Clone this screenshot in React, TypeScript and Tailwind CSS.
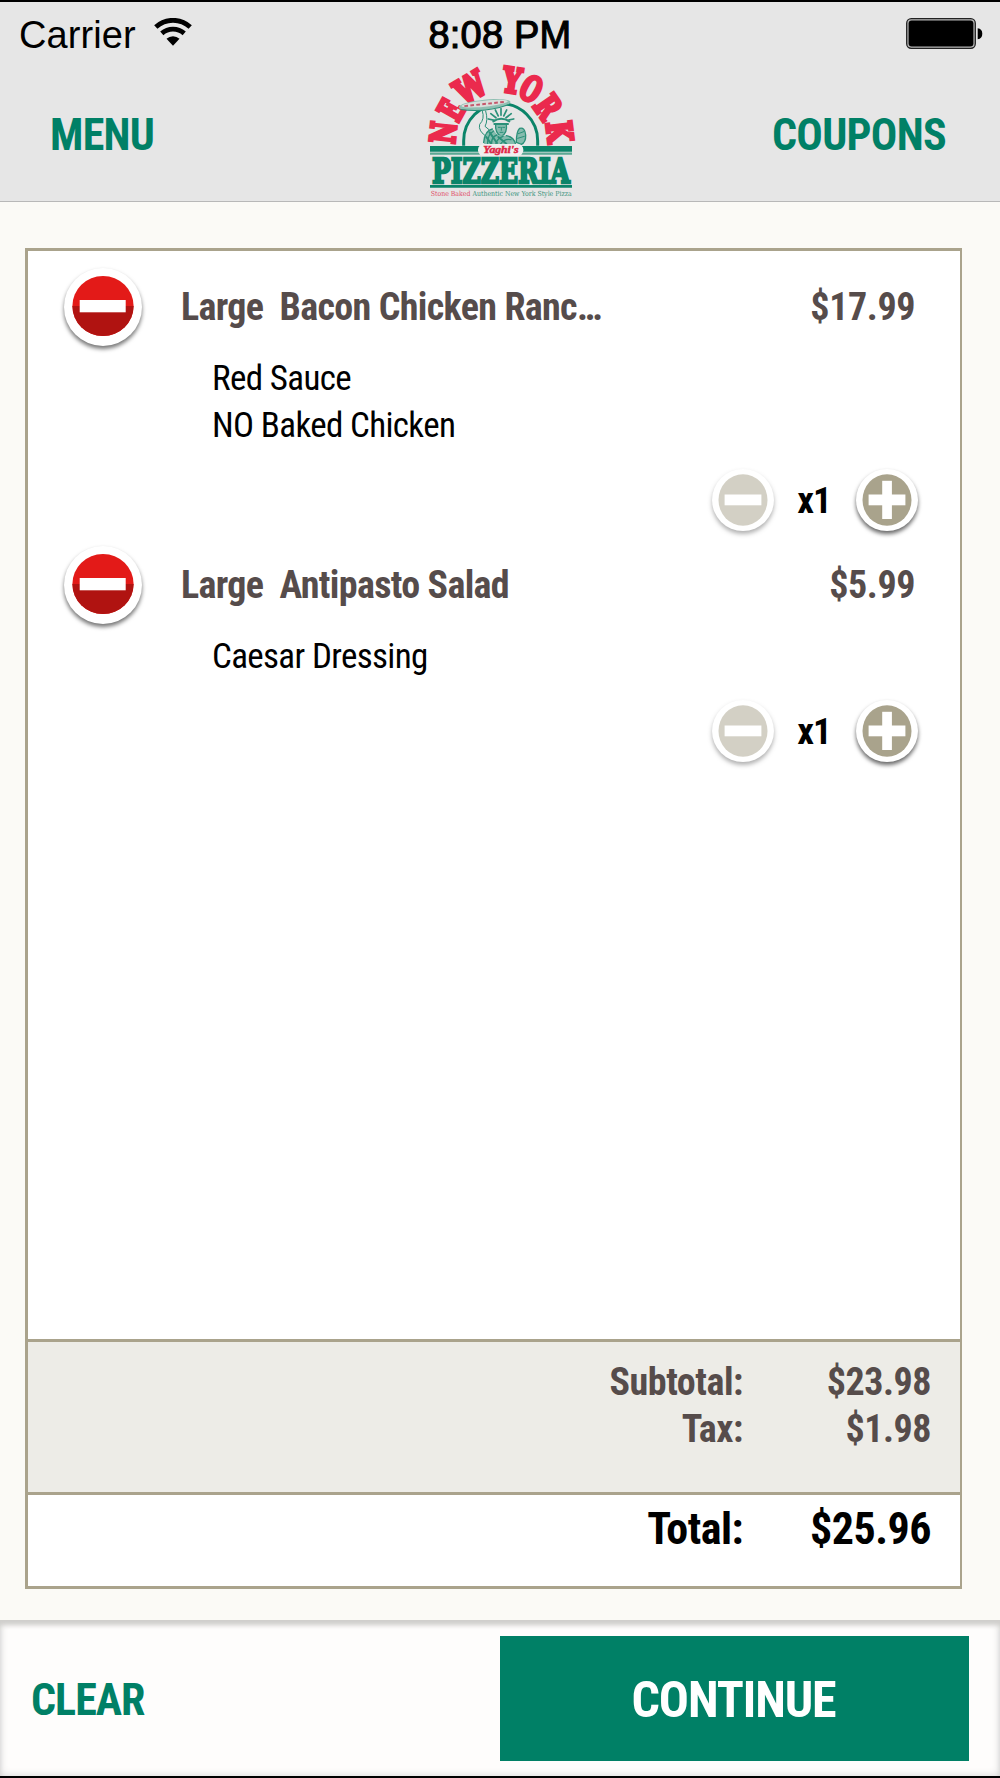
type Item = {
  name: string;
  price: string;
  options: string[];
  quantity: number;
};

const items: Item[] = [
  {
    name: 'Large  Bacon Chicken Ranc…',
    price: '$17.99',
    options: ['Red Sauce', 'NO Baked Chicken'],
    quantity: 1,
  },
  {
    name: 'Large  Antipasto Salad',
    price: '$5.99',
    options: ['Caesar Dressing'],
    quantity: 1,
  },
];

// NEW YORK, one letter at a time round the arch
const archLetters = [
  { char: 'N', x: 98, y: 232, angle: -84, width: 68 },
  { char: 'E', x: 122, y: 165, angle: -61, width: 64 },
  { char: 'W', x: 180, y: 98, angle: -31, width: 80 },
  { char: 'Y', x: 305, y: 76, angle: 9, width: 76 },
  { char: 'O', x: 363, y: 101, angle: 29, width: 66 },
  { char: 'R', x: 413, y: 155, angle: 55, width: 70 },
  { char: 'K', x: 448, y: 230, angle: 83, width: 70 },
];

const crownRays = [-78, -52, -26, 0, 26, 52, 78];

function Logo() {
  return (
    <svg viewBox="50 33 450 405" className="ml-[2px] h-[135px] w-[150px] shrink-0 overflow-visible">
      <path d="M160 272 V257 A111 111 0 0 1 382 257 V272" fill="none" stroke="#0a8469" strokeWidth="9" />

      {/* Statue */}
      <g fill="none" stroke="#2b9079" strokeWidth="4" strokeLinecap="round">
        {crownRays.map((angle) => (
          <path key={angle} d="M272 181 V161" strokeWidth="5" transform={`rotate(${angle} 272 200)`} />
        ))}
        <path d="M249 199 Q272 184 297 199 M252 207 H293" strokeWidth="6" />
        <path d="M216 168 Q224 192 208 208 Q202 228 230 246 M226 168 Q234 196 224 214 L236 224" strokeWidth="3" />
        <path d="M256 208 Q253 234 273 244 Q292 234 288 208 Z" fill="#85bcae" />
        <path d="M264 217 h6 M277 217 h6 M269 232 h9 M273 217 v9" strokeWidth="3" />
        <path d="M220 264 Q224 226 246 222 L262 240 L300 244 Q314 252 316 268 H222 Z" fill="#85bcae" stroke="none" />
        <path d="M220 262 Q224 226 246 222 M232 268 Q230 240 250 228 M244 268 Q242 246 260 240 M256 268 Q260 250 278 244 M288 242 Q310 246 316 268 M270 268 Q282 250 302 254" />
        <path d="M238 232 L260 264 M228 246 L242 266 M264 246 L288 266" strokeWidth="6" />
        <path d="M328 220 Q344 216 346 240 Q347 262 333 268 L318 262 Q318 230 328 220 Z" fill="#85bcae" />
        <path d="M324 236 L340 230 M322 250 L342 244" strokeWidth="3" />
      </g>

      <g fontFamily="'DejaVu Serif', serif" fontWeight="700" fontSize="102" fill="#eb2a4d" textAnchor="middle">
        {archLetters.map(({ char, x, y, angle, width }) => (
          <g key={char} transform={`translate(${x} ${y}) rotate(${angle}) scale(${width / 100} 1)`}>
            <text y="37" stroke="#eb2a4d" strokeWidth="11">
              {char}
            </text>
          </g>
        ))}
      </g>

      {/* Pizza on the raised hand */}
      <g transform="rotate(-6 223 149)">
        <ellipse cx="223" cy="149" rx="78" ry="15" fill="#8fbfb2" />
        <ellipse cx="223" cy="146" rx="70" ry="9" fill="#d9dedb" />
        <path d="M162 147 H286" stroke="#c5566a" strokeWidth="6" strokeDasharray="11 7" />
        <path d="M150 156 Q223 174 296 156" fill="none" stroke="#2b9079" strokeWidth="3" />
      </g>

      <path d="M59 273 H485 V290 H59 Z" fill="#0a8469" />
      <path d="M59 296 H485" stroke="#5aa793" strokeWidth="7" />
      <rect x="203" y="267" width="136" height="36" rx="17" fill="#efefef" />
      <text
        x="272"
        y="294"
        textAnchor="middle"
        textLength="106"
        lengthAdjust="spacingAndGlyphs"
        fontFamily="'Liberation Serif', serif"
        fontSize="31"
        fontStyle="italic"
        fontWeight="700"
        fill="#e02647"
        stroke="#e02647"
        strokeWidth="1.5"
      >
        Yaghi's
      </text>
      <text
        x="65"
        y="383"
        textLength="414"
        lengthAdjust="spacingAndGlyphs"
        fontFamily="'DejaVu Serif', serif"
        fontSize="100"
        fontWeight="700"
        fill="#0a8469"
        stroke="#0a8469"
        strokeWidth="7"
      >
        PIZZERIA
      </text>
      <path d="M59 394 H485" stroke="#0a8469" strokeWidth="8" />
      <text
        x="61"
        y="422"
        textLength="423"
        lengthAdjust="spacingAndGlyphs"
        fontFamily="'DejaVu Serif', serif"
        fontSize="21"
        fontWeight="400"
        fill="#3a937d"
      >
        <tspan fill="#e04f69">Stone Baked</tspan> Authentic New York Style Pizza
      </text>
    </svg>
  );
}

function WifiIcon() {
  return (
    <svg viewBox="0 0 38 28" className="h-7 w-[38px]">
      <g fill="none" stroke="#000" strokeWidth="4.8">
        <path d="M1.8 9 A25.4 25.4 0 0 1 36.2 9" />
        <path d="M7.8 15.4 A16.8 16.8 0 0 1 30.2 15.4" />
      </g>
      <path d="M12.5 20.8 A9.6 9.6 0 0 1 25.5 20.8 L19 27.7 Z" />
    </svg>
  );
}

function BatteryIcon() {
  return (
    <svg viewBox="0 0 77 31" className="h-[31px] w-[77px]">
      <rect x="0.7" y="0.7" width="68.6" height="29.6" rx="4.5" fill="#b5b5b5" stroke="#222" strokeWidth="1.3" />
      <rect x="2.6" y="2.6" width="64.8" height="25.8" rx="3" />
      <path d="M71.7 10.3 Q76.3 11 76.3 15.8 Q76.3 20.6 71.7 21.3 Z" />
    </svg>
  );
}

function StatusBar() {
  return (
    <div className="grid h-16 grid-cols-3 items-center font-['Liberation_Sans',sans-serif] text-[38px] leading-none">
      <div className="flex items-center pt-px pl-[19px]">
        <span className="tracking-[0.1px]">Carrier</span>
        <span className="-mt-[5px] ml-[18px]">
          <WifiIcon />
        </span>
      </div>
      <span className="pt-px text-center tracking-[0.2px] [-webkit-text-stroke:1.1px_black]">8:08 PM</span>
      <div className="-mt-px flex justify-end pr-[17px]">
        <BatteryIcon />
      </div>
    </div>
  );
}

function RemoveButton() {
  return (
    <button aria-label="Remove" className="flex size-[78px] shrink-0 items-center justify-center rounded-full bg-white shadow-[0_3px_4px_rgba(0,0,0,0.55)]">
      <svg viewBox="0 0 62 60" className="-mt-px h-[60px] w-[62px]">
        <ellipse cx="31" cy="30" rx="30.6" ry="30" fill="#e31a18" />
        <path d="M0.4 30 A30.6 30 0 0 0 61.6 30 Z" fill="#b01311" />
        <rect x="7.7" y="24" width="46" height="12.3" fill="#fff" />
      </svg>
    </button>
  );
}

function QuantityButton({ kind, disabled }: { kind: 'minus' | 'plus'; disabled?: boolean }) {
  return (
    <button
      aria-label={kind}
      className={`flex size-[62px] items-center justify-center rounded-full bg-white shadow-[0_3px_4px_rgba(0,0,0,0.6)] ${
        disabled ? 'opacity-50' : ''
      }`}
    >
      <svg viewBox="0 0 50 52" className="h-[52px] w-[50px]">
        <ellipse cx="25" cy="26" rx="24.5" ry="25.8" fill="#a9a38c" />
        <rect x="6.6" y="20.5" width="36.8" height="10.8" fill="#fff" />
        {kind === 'plus' && <rect x="20.2" y="6.8" width="9.7" height="38.2" fill="#fff" />}
      </svg>
    </button>
  );
}

function CartItem({ item }: { item: Item }) {
  return (
    <li>
      <div className="flex h-[104px] items-center pt-[7px] pr-[45px] pl-[36px] text-[38px] font-bold text-[#564c4b]">
        <RemoveButton />
        <span className="ml-[39px] grow pt-[2px] whitespace-pre tracking-[-0.65px]">{item.name}</span>
        <span className="pt-[2px] tracking-[-0.4px]">{item.price}</span>
      </div>
      <ul className="pl-[184px] text-[35px] leading-[47px] tracking-[-0.65px]">
        {item.options.map((option) => (
          <li key={option}>{option}</li>
        ))}
      </ul>
      <div className="flex h-20 items-center justify-end pt-[22px] pr-[42px]">
        <QuantityButton kind="minus" disabled={item.quantity === 1} />
        <span className="w-[82px] pt-[2px] pr-[2px] text-center text-[37px] font-bold tracking-[-1px]">x{item.quantity}</span>
        <QuantityButton kind="plus" />
      </div>
    </li>
  );
}

function SummaryRow({ label, value }: { label: string; value: string }) {
  return (
    <div className="flex justify-end pr-[29px]">
      <span>{label}</span>
      <span className="w-[188px] text-right">{value}</span>
    </div>
  );
}

export default function App() {
  return (
    <div className="flex h-[1778px] w-[1000px] flex-col border-y-2 border-black bg-[#fbfaf6] font-['Roboto_Condensed',Roboto,sans-serif] text-black">
      <header className="h-[200px] border-b border-[#b8b8b8] bg-[#e6e6e6]">
        <StatusBar />
        <nav className="grid h-[135px] grid-cols-[1fr_150px_1fr] items-center text-[44px] font-bold text-[#008066]">
          <a href="#menu" className="pt-[2px] pl-[50px] tracking-[-0.7px]">
            MENU
          </a>
          <Logo />
          <a href="#coupons" className="pt-[2px] pr-[54px] text-right tracking-[-0.7px]">
            COUPONS
          </a>
        </nav>
      </header>

      <main className="grow pt-[46px] pl-[25px]">
        <section className="flex h-[1341px] w-[937px] flex-col border-[3px] border-r-2 border-[#aaa38c] bg-white">
          <ul className="grow">
            {items.map((item) => (
              <CartItem key={item.name} item={item} />
            ))}
          </ul>

          <div className="h-[156px] border-y-[3px] border-[#aaa38c] bg-[#edece7] pt-[17px] text-[38px] leading-[47px] font-bold tracking-[-0.45px] text-[#564c4b]">
            <SummaryRow label="Subtotal:" value="$23.98" />
            <SummaryRow label="Tax:" value="$1.98" />
          </div>
          <div className="h-[91px] pt-[7px] text-[44px] leading-[54px] font-bold tracking-[-0.5px]">
            <SummaryRow label="Total:" value="$25.96" />
          </div>
        </section>
      </main>

      <footer className="flex h-[156px] shrink-0 items-start justify-between bg-[#fefdfc] pt-4 pr-[31px] pl-[31px] font-bold shadow-[inset_0_6px_5px_-1px_#cfcecb,inset_0_0_9px_#d4d4d4]">
        <button className="h-[125px] pt-[3px] text-[44px] tracking-[-1px] text-[#008066]">CLEAR</button>
        <button className="h-[125px] w-[469px] bg-[#008066] pt-[3px] pr-[2px] text-[50px] tracking-[-1.1px] text-white">
          CONTINUE
        </button>
      </footer>
    </div>
  );
}
